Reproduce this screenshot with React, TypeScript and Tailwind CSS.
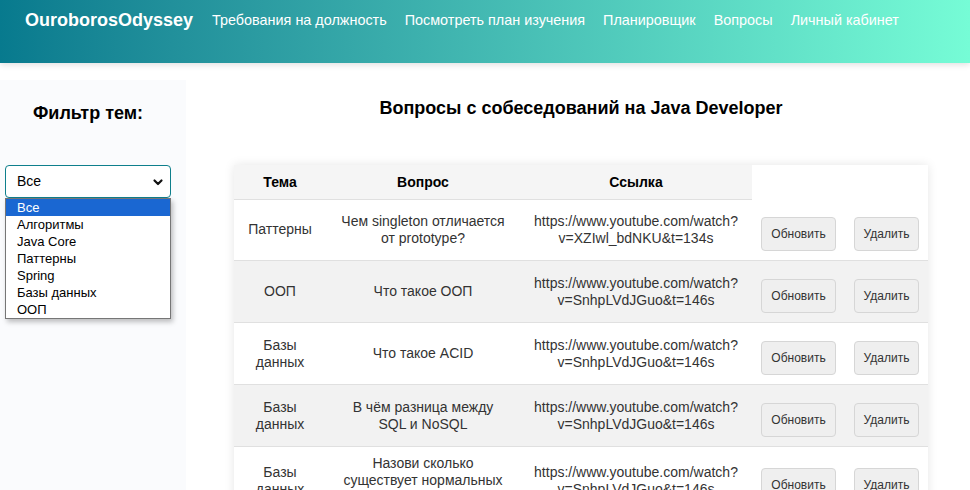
import React from "react";

const rows = [
  { topic: "Паттерны", q: "Чем singleton отличается от prototype?", v: "v=XZIwl_bdNKU&t=134s" },
  { topic: "ООП", q: "Что такое ООП", v: "v=SnhpLVdJGuo&t=146s" },
  { topic: "Базы данных", q: "Что такое ACID", v: "v=SnhpLVdJGuo&t=146s" },
  { topic: "Базы данных", q: "В чём разница между SQL и NoSQL", v: "v=SnhpLVdJGuo&t=146s" },
  { topic: "Базы данных", q: "Назови сколько существует нормальных форм", v: "v=SnhpLVdJGuo&t=146s" },
];

const options = ["Все", "Алгоритмы", "Java Core", "Паттерны", "Spring", "Базы данных", "ООП"];

export default function App() {
  return (
    <div className="bg-white font-['Liberation_Sans',Arial,sans-serif] text-[#222] overflow-hidden h-[490px]">
      <header className="relative z-10 h-[63px] bg-linear-to-r from-[#077a8e] to-[#76fcd6] shadow-[0_2px_6px_rgba(0,0,0,0.12)] flex items-start pt-[9px] pl-[25px] gap-[19px] text-white">
        <span className="text-[18px] font-bold leading-[22px]">OuroborosOdyssey</span>
        <nav className="flex gap-[18px] text-[14.4px] leading-[22px]">
          <span>Требования на должность</span>
          <span>Посмотреть план изучения</span>
          <span>Планировщик</span>
          <span>Вопросы</span>
          <span>Личный кабинет</span>
        </nav>
      </header>
      <div className="flex pt-[17px]">
        <aside className="w-[186px] h-[420px] bg-[#fafbfd] pl-[5px] pr-[15px] pt-[23px] shrink-0">
          <h2 className="text-[18px] font-bold leading-[20px] text-center text-black">Фильтр тем:</h2>
          <div className="relative mt-[42px]">
            <div className="h-[33px] rounded-[4px] border border-[#0e7f8c] bg-white flex items-center justify-between pl-[11px] pr-[6px] text-[14px] text-black">
              <span>Все</span>
              <svg width="12" height="12" viewBox="0 0 12 12" fill="none">
                <path d="M2.5 4.5 L6 8 L9.5 4.5" stroke="#111" strokeWidth="2.2" strokeLinecap="round" strokeLinejoin="round" />
              </svg>
            </div>
            <ul className="absolute left-0 top-[33px] w-[166px] bg-white border border-[#767676] shadow-[2px_3px_5px_rgba(0,0,0,0.25)] text-[13px] text-black z-20">
              {options.map((o, i) => (
                <li
                  key={o}
                  className={
                    i === 0
                      ? "h-[17px] leading-[17px] pl-[11px] bg-[#1a67d2] text-white"
                      : "h-[17px] leading-[17px] pl-[11px]"
                  }
                >
                  {o}
                </li>
              ))}
            </ul>
          </div>
        </aside>
        <main className="ml-[48px] w-[694px] shrink-0">
          <h1 className="mt-[17px] text-[18px] font-bold leading-[22px] text-center text-black">
            Вопросы с собеседований на Java Developer
          </h1>
          <table className="mt-[46px] w-[694px] table-fixed border-collapse bg-white shadow-[0_0_10px_rgba(0,0,0,0.1)] text-[14px]">
            <colgroup>
              <col className="w-[92px]" />
              <col className="w-[194px]" />
              <col className="w-[232px]" />
              <col className="w-[93px]" />
              <col className="w-[83px]" />
            </colgroup>
            <thead>
              <tr>
                <th className="h-[34px] bg-[#f5f5f5] border-b border-[#e0e0e0] font-bold text-black leading-[18px] px-3">Тема</th>
                <th className="h-[34px] bg-[#f5f5f5] border-b border-[#e0e0e0] font-bold text-black leading-[18px] px-3">Вопрос</th>
                <th className="h-[34px] bg-[#f5f5f5] border-b border-[#e0e0e0] font-bold text-black leading-[18px] px-3">Ссылка</th>
                <th className="bg-white"></th>
                <th className="bg-white"></th>
              </tr>
            </thead>
            <tbody>
              {rows.map((r, i) => (
                <tr key={i} className={i % 2 === 1 ? "bg-[#f2f2f2] border-b border-[#e0e0e0]" : "bg-white border-b border-[#e0e0e0]"}>
                  <td className="py-2 px-3 text-center leading-[17px] text-[#333]">{r.topic}</td>
                  <td className="py-2 px-3 text-center leading-[17px] text-[#333]">{r.q}</td>
                  <td className="py-2 px-[10px] text-center leading-[17px] text-[#333]">
                    https://www.youtube.com/watch?
                    <br />
                    {r.v}
                  </td>
                  <td className="py-2 text-center">
                    <button className="mt-[10px] mb-[1px] w-[75px] h-[34px] rounded-[4px] border border-[#d6d6d6] bg-[#efefef] text-[12px] text-[#333]">
                      Обновить
                    </button>
                  </td>
                  <td className="py-2 text-center">
                    <button className="mt-[10px] mb-[1px] w-[65px] h-[34px] rounded-[4px] border border-[#d6d6d6] bg-[#efefef] text-[12px] text-[#333]">
                      Удалить
                    </button>
                  </td>
                </tr>
              ))}
            </tbody>
          </table>
        </main>
      </div>
    </div>
  );
}
